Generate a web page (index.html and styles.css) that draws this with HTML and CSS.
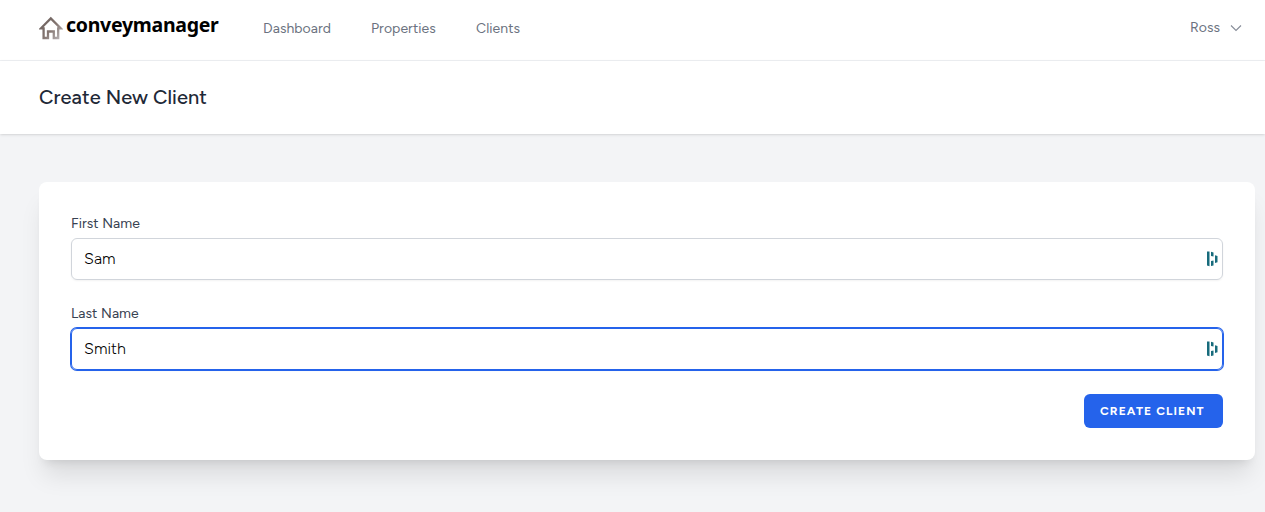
FILE: index.html
```html
<!DOCTYPE html>
<html lang="en">
<head>
<meta charset="utf-8">
<title>Create New Client</title>
<link rel="stylesheet" href="styles.css">
</head>
<body>
<nav class="nav">
  <a class="logo">
    <svg class="logo-icon" width="24" height="24" viewBox="0 0 24 24" fill="none" stroke="url(#roof)" stroke-width="2.3">
      <defs><linearGradient id="roof" gradientUnits="userSpaceOnUse" x1="2" y1="4" x2="22" y2="22"><stop stop-color="#6b605d"/><stop offset=".5" stop-color="#83746f"/><stop offset="1" stop-color="#b9b4b6"/></linearGradient></defs>
      <path d="M4.6 12.3H2L11.8 2.4L21.6 12.3H19.2V22H14.8V15.5H9V22H4.6Z"/>
    </svg>
    <span class="logo-text">conveymanager</span>
  </a>
  <div class="links">
    <a class="link dashboard">Dashboard</a>
    <a class="link properties">Properties</a>
    <a class="link clients">Clients</a>
  </div>
  <div class="user">
    <span class="user-name">Ross</span>
    <svg class="chevron" width="12" height="8" viewBox="0 0 12 8" fill="none" stroke="#868c98" stroke-width="1.1"><path d="M1 1.5L6 6.5L11 1.5"/></svg>
  </div>
</nav>
<header class="header"><h1 class="title">Create New Client</h1></header>
<main class="main">
  <form class="card">
    <label class="label" for="first">First Name</label>
    <div class="field">
      <input class="input" id="first" type="text" value="Sam">
      <svg class="manager" width="12" height="16" viewBox="0 0 12 16" fill="#176b7c"><path d="M1 .5H3.5V15.2L1 14.6ZM5 .8L7.5 1.5V5.6L5 4.9ZM5 10L7.5 9.4V14.4L5 15.1ZM9 4.2L11.5 4.9V11.2L9 11.9Z"/></svg>
    </div>
    <label class="label" for="last">Last Name</label>
    <div class="field focused">
      <input class="input" id="last" type="text" value="Smith">
      <svg class="manager" width="12" height="16" viewBox="0 0 12 16" fill="#176b7c"><path d="M1 .5H3.5V15.2L1 14.6ZM5 .8L7.5 1.5V5.6L5 4.9ZM5 10L7.5 9.4V14.4L5 15.1ZM9 4.2L11.5 4.9V11.2L9 11.9Z"/></svg>
    </div>
    <div class="actions"><button class="button" type="button">Create Client</button></div>
  </form>
</main>
</body>
</html>
```
FILE: styles.css
```css
* { box-sizing: border-box; }
body {
  margin: 0;
  min-height: 512px;
  background: #f3f4f6;
  font-family: Figtree, Inter, sans-serif;
  overflow: hidden;
}
.nav {
  display: flex;
  height: 61px;
  padding: 0 23px 0 39px;
  background: #fff;
  border-bottom: 1px solid #eef0f3;
}
.logo { display: flex; width: 224px; padding-top: 16px; }
.logo-icon { flex: none; }
.logo-text {
  margin: -5px 0 0 3px;
  font: 700 19.5px/28px "Noto Sans", sans-serif;
  letter-spacing: -.28px;
  color: #000;
}
.links { display: flex; gap: 40px; padding-top: 19px; }
.link, .user-name {
  font-size: 14px;
  line-height: 20px;
  font-weight: 450;
  letter-spacing: .06px;
  color: #6b7280;
  white-space: nowrap;
}
.dashboard { width: 68px; }
.properties { width: 65px; }
.user { display: flex; margin-left: auto; padding-top: 18px; }
.user-name { width: 40px; }
.chevron { margin-top: 6px; }
.header {
  height: 73px;
  padding: 22px 39px;
  background: #fff;
  box-shadow: 0 1px 3px rgba(0, 0, 0, .1), 0 1px 2px -1px rgba(0, 0, 0, .1);
}
.title {
  margin: 0;
  font-size: 20px;
  line-height: 28px;
  font-weight: 550;
  letter-spacing: .08px;
  color: #1f2937;
}
.main { padding: 48px 10px 0 39px; }
.card {
  height: 278px;
  padding: 32px;
  background: #fff;
  border-radius: 8px;
  box-shadow: 0 20px 25px -5px rgba(0, 0, 0, .1), 0 8px 10px -6px rgba(0, 0, 0, .1);
}
.label {
  display: block;
  height: 20px;
  margin-bottom: 4px;
  font-size: 14px;
  line-height: 20px;
  font-weight: 450;
  letter-spacing: .06px;
  color: #374151;
}
.field {
  display: flex;
  align-items: center;
  height: 42px;
  margin-bottom: 24px;
  padding: 0 4px 0 12px;
  border: 1px solid #d1d5db;
  border-radius: 6px;
  box-shadow: 0 1px 2px rgba(0, 0, 0, .05);
}
.focused {
  border-color: #2563eb;
  box-shadow: 0 0 0 1px #2563eb, 0 1px 2px rgba(0, 0, 0, .05);
}
.input {
  flex: 1;
  min-width: 0;
  height: 24px;
  padding: 0;
  border: 0;
  outline: 0;
  background: transparent;
  font: 350 16px/24px Figtree, Inter, sans-serif;
  letter-spacing: .06px;
  color: #000;
}
.actions { display: flex; justify-content: flex-end; }
.button {
  height: 34px;
  width: 139px;
  padding: 0 0 0 16px;
  border: 0;
  border-radius: 6px;
  background: #2563eb;
  color: #fff;
  font: 700 12px/16px Figtree, Inter, sans-serif;
  letter-spacing: 1.1px;
  text-align: left;
  text-transform: uppercase;
}
```
